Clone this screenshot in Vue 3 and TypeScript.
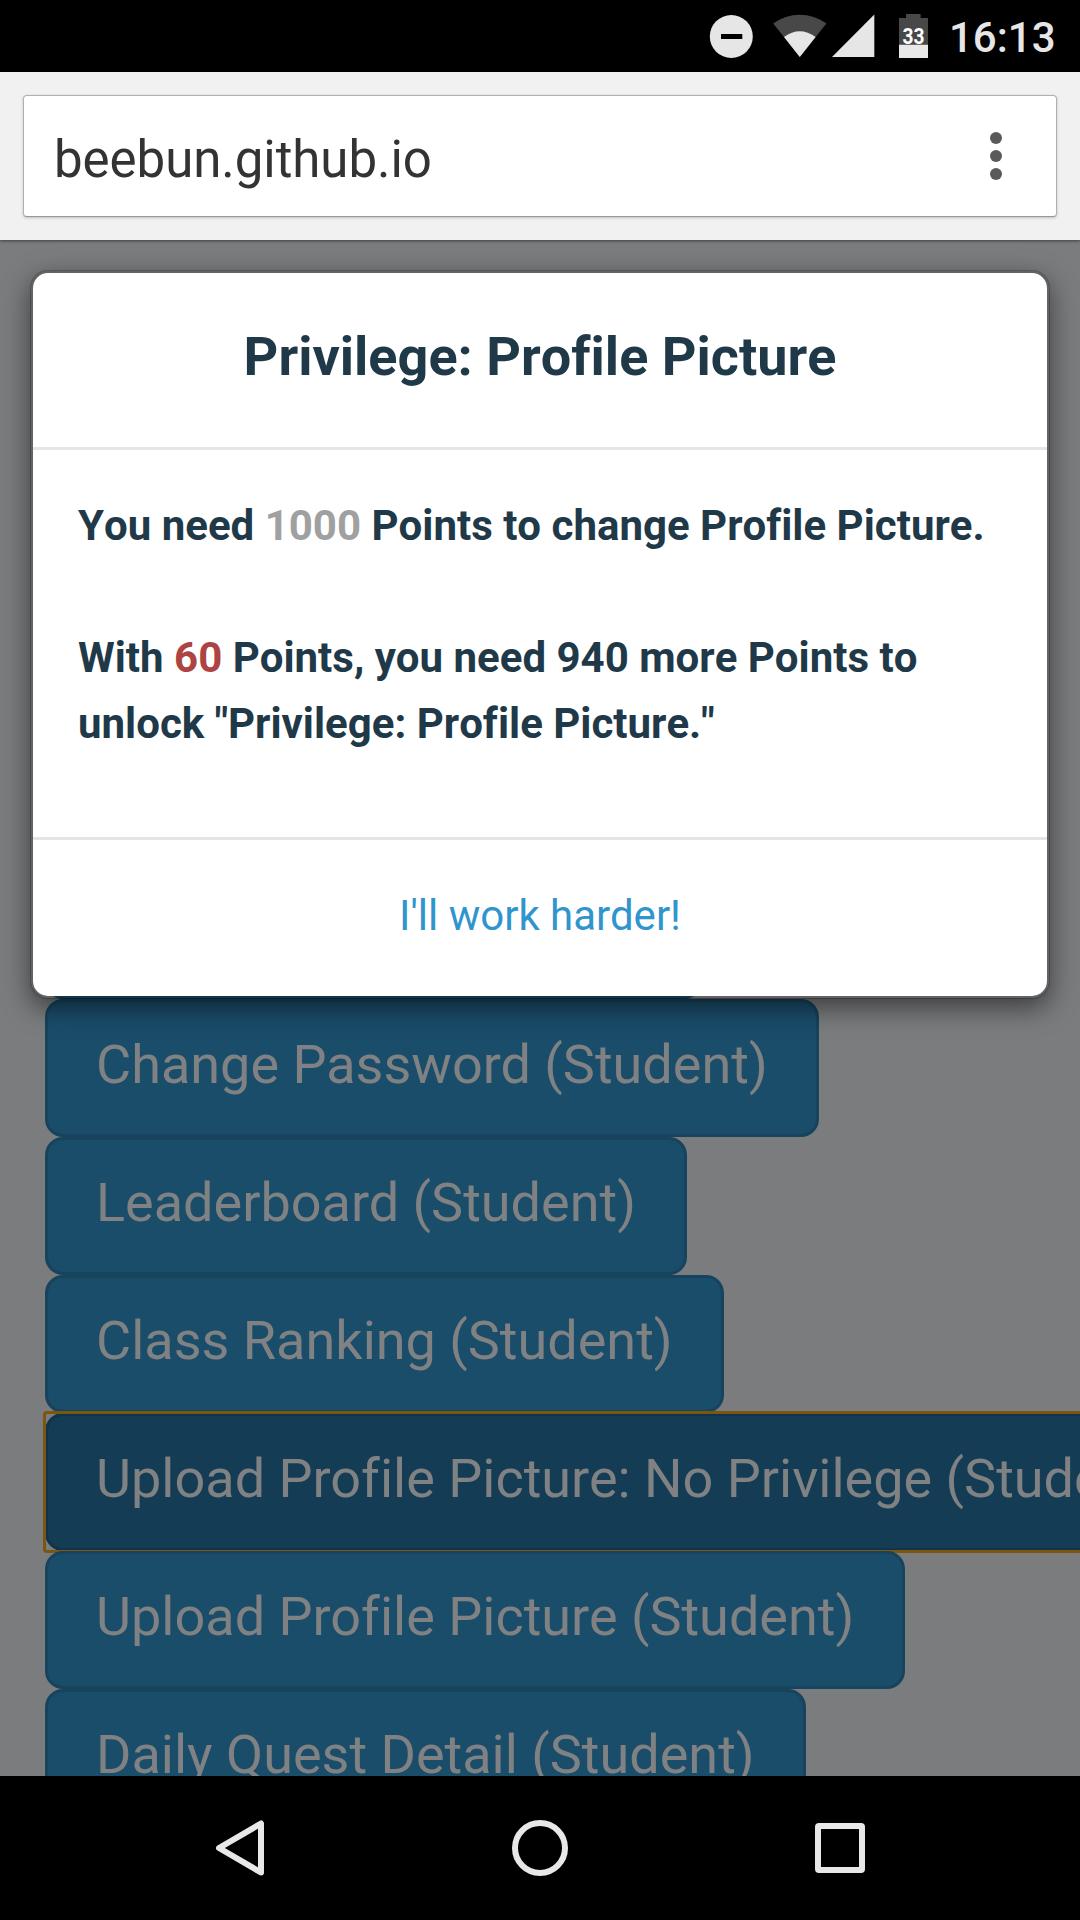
<script setup lang="ts">
interface MenuItem {
  label: string
  focused?: boolean
}

const items: MenuItem[] = [
  { label: 'Change Password (Student)' },
  { label: 'Leaderboard (Student)' },
  { label: 'Class Ranking (Student)' },
  { label: 'Upload Profile Picture: No Privilege (Student)', focused: true },
  { label: 'Upload Profile Picture (Student)' },
  { label: 'Daily Quest Detail (Student)' },
]

const required = 1000
const points = 60
</script>

<template>
  <div class="screen">
    <header class="status">
      <svg class="dnd" width="44" height="44" viewBox="0 0 44 44">
        <circle cx="22.3" cy="22.5" r="21.5" fill="#e6e6e6" />
        <rect x="12" y="20" width="21.3" height="5" fill="#000" />
      </svg>
      <svg class="wifi" width="54" height="44" viewBox="0 0 54 44">
        <path d="M0.2 9.6A44 44 0 0 1 53.4 9.6L26.8 43Z" fill="#484848" />
        <path d="M11 23Q26.8 11.5 42.6 23L26.8 43Z" fill="#e6e6e6" />
      </svg>
      <svg class="signal" width="43" height="44" viewBox="0 0 43 44">
        <path d="M0 43L42.3 0.4V43Z" fill="#e6e6e6" />
      </svg>
      <svg class="battery" width="30" height="44" viewBox="0 0 30 44">
        <path d="M7 0H21.6V4H29V30.7H0V4H7Z" fill="#484848" />
        <rect x="0" y="30.7" width="29" height="13.3" fill="#e8e8e8" />
        <text x="3.6" y="29.8" textLength="22" lengthAdjust="spacingAndGlyphs" class="level">33</text>
      </svg>
      <span class="clock">16:13</span>
    </header>

    <div class="toolbar">
      <div class="omnibox">
        <span class="url">beebun.github.io</span>
        <svg class="more" width="12" height="48" viewBox="0 0 12 48">
          <circle v-for="cy in [6, 24, 42]" :key="cy" cx="6" :cy="cy" r="6" fill="#5a5a5a" />
        </svg>
      </div>
    </div>

    <main class="page">
      <nav class="menu">
        <div class="btn covered"></div>
        <button v-for="item in items" :key="item.label" class="btn" :class="{ focused: item.focused }">
          {{ item.label }}
        </button>
      </nav>

      <section class="modal">
        <h4 class="modal-title">Privilege: Profile Picture</h4>
        <div class="modal-body">
          <p>You need <span class="need">{{ required }}</span> Points to change Profile Picture.</p>
          <p>
            With <span class="have">{{ points }}</span> Points, you need {{ required - points }} more Points to<br />
            unlock "Privilege: Profile Picture."
          </p>
        </div>
        <div class="modal-footer"><a class="dismiss">I'll work harder!</a></div>
      </section>
    </main>

    <footer class="navbar">
      <svg width="56" height="56" viewBox="0 0 56 56">
        <path d="M49 3.5V52.5L7 28Z" />
      </svg>
      <svg width="56" height="56" viewBox="0 0 56 56">
        <circle cx="28" cy="28" r="25" />
      </svg>
      <svg width="56" height="56" viewBox="0 0 56 56">
        <rect x="6" y="6" width="44" height="44" rx="1" />
      </svg>
    </footer>
  </div>
</template>

<style>
body {
  margin: 0;
  background: #000;
}
</style>

<style scoped>
.screen {
  width: 1080px;
  height: 1920px;
  display: flex;
  flex-direction: column;
  overflow: hidden;
  font-family: Roboto, sans-serif;
  font-variant-ligatures: none;
}

.status {
  height: 72px;
  flex: none;
  display: flex;
  align-items: flex-start;
  padding-left: 709px;
  box-sizing: border-box;
  background: #000;
}
.status svg {
  flex: none;
  margin-top: 14px;
}
.wifi {
  margin-left: 20px;
}
.signal {
  margin-left: 5px;
}
.battery {
  margin-left: 24px;
}
.level {
  font-size: 22px;
  font-weight: 700;
  fill: #fff;
}
.clock {
  margin-left: 20px;
  line-height: 76px;
  font-size: 42px;
  font-weight: 500;
  color: #e6e6e6;
  white-space: nowrap;
}

.toolbar {
  position: relative;
  z-index: 2;
  height: 168px;
  flex: none;
  box-sizing: border-box;
  padding: 23px;
  background: #f1f1f1;
  box-shadow: 0 1px 3px rgba(0, 0, 0, 0.5);
}
.omnibox {
  height: 122px;
  box-sizing: border-box;
  display: flex;
  align-items: center;
  justify-content: space-between;
  padding: 0 54px 0 30px;
  border: 1px solid #b0b0b0;
  border-bottom-color: #989898;
  border-radius: 4px;
  background: #fff;
  box-shadow: 0 1px 3px rgba(0, 0, 0, 0.2);
}
.url {
  font-size: 51px;
  line-height: 60px;
  letter-spacing: -0.05px;
  color: #333;
  padding-top: 7px;
}

.page {
  position: relative;
  flex: 1;
  min-height: 0;
  overflow: hidden;
  background: #7b7c7e;
}
.menu {
  padding: 621px 0 0 45px;
  display: flex;
  flex-direction: column;
  align-items: flex-start;
}
.btn {
  position: relative;
  flex: none;
  height: 138px;
  box-sizing: border-box;
  margin: 0;
  padding: 0 48px 6px;
  border: 3px solid #17435d;
  border-radius: 18px;
  background: #1a4d6a;
  color: #7f8183;
  font-family: inherit;
  font-size: 54px;
  line-height: 126px;
  font-variant-ligatures: none;
  white-space: nowrap;
}
.covered {
  width: 657px;
}
.focused {
  background: #143d55;
  border-color: #10344a;
}
/* Focus ring keeps nearly square corners around the rounded button. */
.focused::after {
  content: '';
  position: absolute;
  inset: -5px;
  border: 3px solid #7c560e;
  border-radius: 4px;
}

.modal {
  position: absolute;
  top: 30px;
  left: 30px;
  width: 1020px;
  height: 729px;
  box-sizing: border-box;
  display: flex;
  flex-direction: column;
  border: 3px solid rgba(0, 0, 0, 0.2);
  border-radius: 18px;
  background: #fff;
  background-clip: padding-box;
  box-shadow: 0 9px 27px rgba(0, 0, 0, 0.5);
  color: #1f3949;
}
.modal-title {
  height: 174px;
  flex: none;
  margin: 0;
  border-bottom: 3px solid #e5e5e5;
  text-align: center;
  font-size: 54px;
  font-weight: 700;
  font-kerning: none;
  line-height: 168px;
}
.modal-body {
  flex: 1;
  padding: 43px 45px 0;
  font-size: 42px;
  font-weight: 700;
  font-kerning: none;
  line-height: 66px;
  white-space: nowrap;
}
.modal-body p {
  margin: 0 0 66px;
}
.need {
  color: #a0a0a0;
}
.have {
  color: #ad4343;
}
.modal-footer {
  height: 156px;
  flex: none;
  border-top: 3px solid #e5e5e5;
  text-align: center;
  font-size: 42px;
  line-height: 152px;
}
.dismiss {
  color: #3195cd;
}

.navbar {
  height: 144px;
  flex: none;
  display: flex;
  align-items: center;
  justify-content: space-between;
  padding: 0 212px;
  box-sizing: border-box;
  background: #000;
}
.navbar svg {
  fill: none;
  stroke: #e8e8e8;
  stroke-width: 6;
  stroke-linejoin: round;
}
</style>
